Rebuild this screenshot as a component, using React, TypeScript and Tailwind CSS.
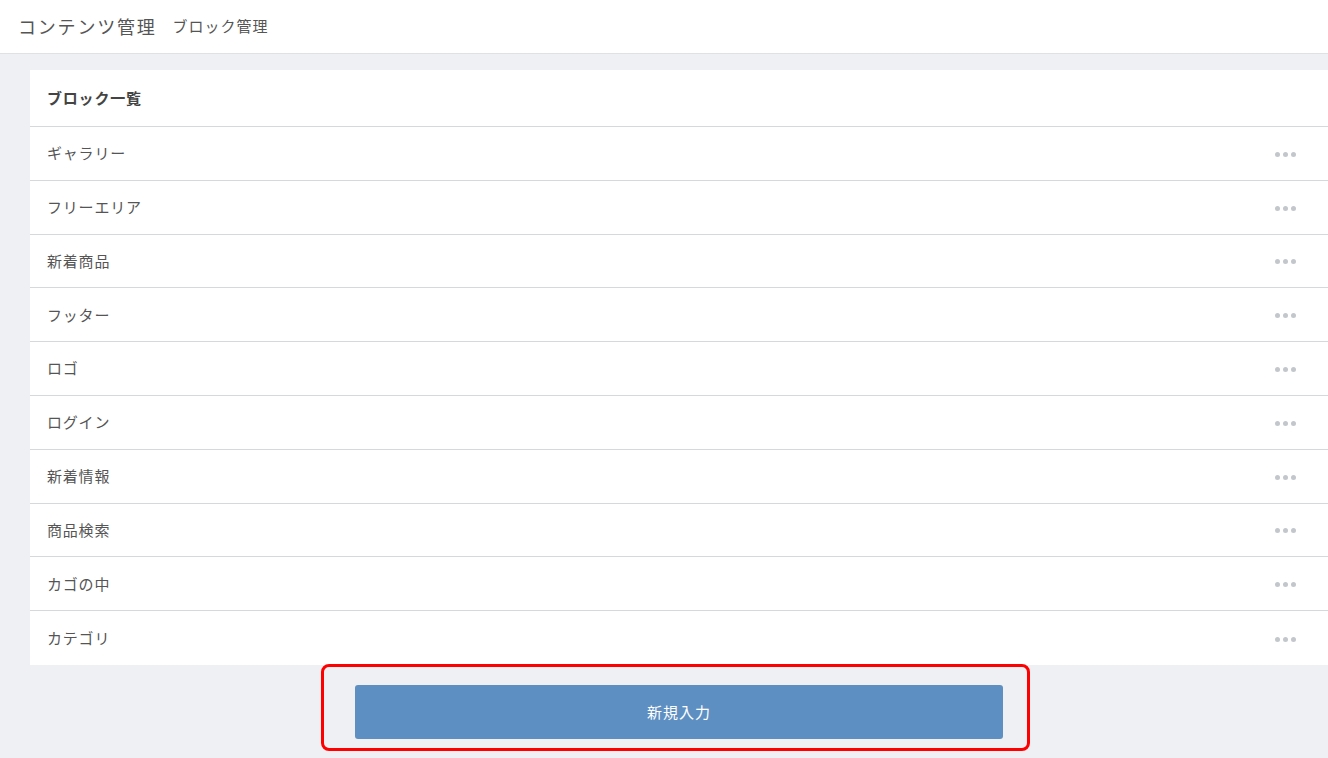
const blocks = [
  'ギャラリー',
  'フリーエリア',
  '新着商品',
  'フッター',
  'ロゴ',
  'ログイン',
  '新着情報',
  '商品検索',
  'カゴの中',
  'カテゴリ',
];

export default function App() {
  return (
    <div
      className="min-h-[758px] bg-[#eef0f4] text-[#555]"
      style={{ fontFamily: '"Noto Sans CJK JP", "Noto Sans", sans-serif' }}
    >
      {/* Header */}
      <header className="h-[54px] bg-white border-b border-[#dfe1e5] flex items-center pl-[18px]">
        <h1 className="text-[18px] font-normal tracking-[1.8px] text-[#555]">コンテンツ管理</h1>
        <span className="ml-[16px] text-[15px] tracking-[1px] text-[#555]">ブロック管理</span>
      </header>

      <main className="pl-[30px] pt-[16px]">
        <div className="bg-white">
          <div className="h-[57px] flex items-center px-[17px] border-b border-[#d6d9dc]">
            <h2 className="text-[15px] font-bold tracking-[0.8px] text-[#444]">ブロック一覧</h2>
          </div>
          {blocks.map((name, i) => (
            <div
              key={name}
              className={`h-[53.8px] flex items-center justify-between pl-[17px] pr-[32px] ${
                i < blocks.length - 1 ? 'border-b border-[#d6d9dc]' : ''
              }`}
            >
              <span className="text-[15px] tracking-[0.8px] text-[#555]">{name}</span>
              <span className="flex gap-[3px] mt-[2px]">
                <span className="w-[5px] h-[5px] rounded-full bg-[#c3c7cb]" />
                <span className="w-[5px] h-[5px] rounded-full bg-[#c3c7cb]" />
                <span className="w-[5px] h-[5px] rounded-full bg-[#c3c7cb]" />
              </span>
            </div>
          ))}
        </div>

        <div className="relative flex justify-center pt-[20px] pb-[20px]">
          <button className="w-[648px] h-[54px] rounded-[3px] bg-[#5e8fc2] text-white text-[15px] tracking-[1px]">
            新規入力
          </button>
          <div className="absolute left-[291px] top-[-1px] w-[709px] h-[87px] border-[3px] border-[#ff0000] rounded-[8px] pointer-events-none" />
        </div>
      </main>
    </div>
  );
}
